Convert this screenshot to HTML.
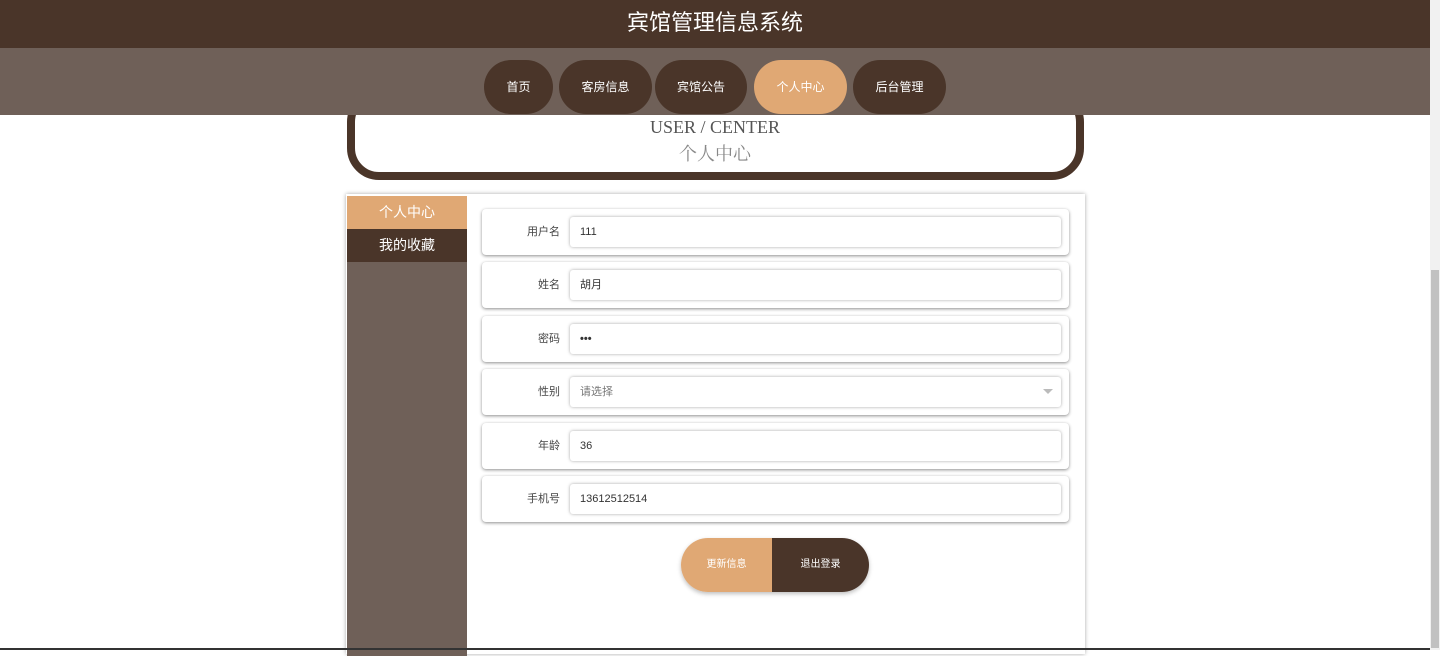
<!DOCTYPE html>
<html><head><meta charset="utf-8"><style>
*{margin:0;padding:0;box-sizing:border-box}
body{width:1440px;height:650px;overflow:hidden;background:#fff;font-family:"Liberation Sans","Noto Sans CJK SC",sans-serif;position:relative}
.hd{position:absolute;left:0;top:0;width:1430px;height:48px;background:#4a3529;color:#fff;font-size:22px;text-align:center;line-height:46px;font-weight:normal}
.nav{position:absolute;left:0;top:48px;width:1430px;height:67px;background:#6f6058;z-index:2}
.nb{position:absolute;top:12px;height:54px;border-radius:30px;background:#4a3529;color:#fff;font-size:12px;text-align:center;line-height:54px}
.tb{position:absolute;left:347px;top:90px;width:737px;height:90px;border:8px solid #4a3529;border-radius:32px;text-align:center}
.t1{position:absolute;top:117px;left:0;width:1430px;text-align:center;font-family:"Liberation Serif","Noto Serif CJK SC",serif;font-size:18px;color:#555}
.t2{position:absolute;top:140px;left:0;width:1430px;text-align:center;font-family:"Liberation Serif","Noto Serif CJK SC",serif;font-size:18px;color:#888}
.main{position:absolute;left:346px;top:194px;width:739px;height:460px;box-shadow:0 0 4px rgba(0,0,0,.35);background:#fff}
.side{position:absolute;left:1px;top:2px;width:120px;height:460px;background:#6f6058}
.si{height:33px;line-height:33px;color:#fff;text-align:center;font-size:14px}
.row{position:absolute;left:136px;width:587px;height:46px;border-radius:4px;box-shadow:0 1px 3px rgba(0,0,0,.45);background:#fff}
.lb{position:absolute;right:509px;top:0;line-height:46px;font-size:11px;color:#444}
.in{position:absolute;left:88px;top:8px;width:491px;height:30px;border-radius:3px;box-shadow:0 0 3px rgba(0,0,0,.35);font-size:11px;color:#333;line-height:30px;padding-left:10px}
.sb{position:absolute;right:0;top:0;width:10px;height:650px;background:#f1f1f1}
.th{position:absolute;right:1px;top:270px;width:8px;height:378px;background:#c1c1c1}
</style></head><body>
<div class="hd">宾馆管理信息系统</div>
<div class="nav">
<div class="nb" style="left:484px;width:69px">首页</div>
<div class="nb" style="left:559px;width:93px">客房信息</div>
<div class="nb" style="left:655px;width:92px">宾馆公告</div>
<div class="nb" style="left:754px;width:93px;background:#e0a874">个人中心</div>
<div class="nb" style="left:853px;width:93px">后台管理</div>
</div>
<div class="tb"></div>
<div class="t1">USER / CENTER</div>
<div class="t2">个人中心</div>
<div class="main">
<div class="side"><div class="si" style="background:#e0a874">个人中心</div><div class="si" style="background:#4a3529">我的收藏</div></div>
<div class="row" style="top:15px"><span class="lb">用户名</span><div class="in">111</div></div>
<div class="row" style="top:68px"><span class="lb">姓名</span><div class="in">胡月</div></div>
<div class="row" style="top:122px"><span class="lb">密码</span><div class="in" style="font-weight:bold">•••</div></div>
<div class="row" style="top:175px"><span class="lb">性别</span><div class="in" style="color:#777">请选择<span style="position:absolute;right:8px;top:12px;border:5px solid transparent;border-top:5px solid #bbb;border-bottom:0"></span></div></div>
<div class="row" style="top:229px"><span class="lb">年龄</span><div class="in">36</div></div>
<div class="row" style="top:282px"><span class="lb">手机号</span><div class="in">13612512514</div></div>
<div style="position:absolute;left:335px;top:344px;width:188px;height:54px;border-radius:27px;overflow:hidden;box-shadow:0 2px 4px rgba(0,0,0,.25);display:flex;font-size:10px;color:#fff;line-height:54px;text-align:center">
<div style="width:91px;background:#e0a874">更新信息</div><div style="width:97px;background:#4a3529">退出登录</div></div>
</div>
<div style="position:absolute;left:0;top:648px;width:1430px;height:2px;background:#333"></div>
<div class="sb"><div class="th"></div></div>
</body></html>
